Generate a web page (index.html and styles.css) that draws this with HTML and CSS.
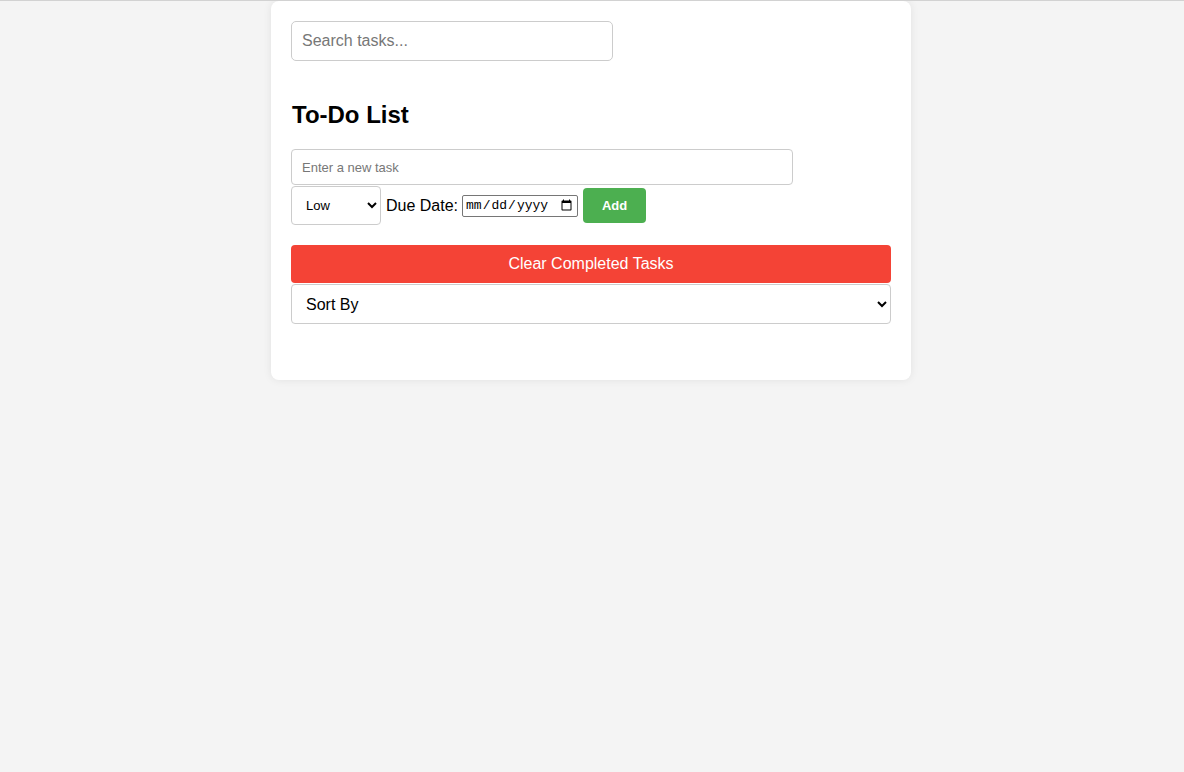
FILE: index.html
```html
<!DOCTYPE html>
<html>
<head>
<meta charset="utf-8">
<title>To-Do List</title>
<link rel="stylesheet" href="styles.css">
</head>
<body>
<div class="container">
  <input class="search" type="text" placeholder="Search tasks...">
  <h2 class="title">To-Do List</h2>
  <input class="task-input" type="text" placeholder="Enter a new task">
  <div class="row">
    <select class="priority">
      <option>Low</option>
      <option>Medium</option>
      <option>High</option>
    </select>
    <label class="due-label">Due Date:</label>
    <input class="due" type="date">
    <button class="add">Add</button>
  </div>
  <button class="clear">Clear Completed Tasks</button>
  <select class="sort">
    <option>Sort By</option>
    <option>Priority</option>
    <option>Due Date</option>
  </select>
  <ul class="list"></ul>
</div>
</body>
</html>
```
FILE: styles.css
```css
html {
  border-top: 1px solid #d2d2d2;
  background: #f4f4f4;
}
body {
  margin: 0;
  padding-right: 2px;
  font-family: "Liberation Sans", Arial, sans-serif;
  background: #f4f4f4;
  min-height: 771px;
}
.container {
  width: 600px;
  margin: 0 auto;
  padding: 20px 20px 0 20px;
  background: #fff;
  border-radius: 8px;
  box-shadow: 0 0 8px rgba(0, 0, 0, 0.08);
}
.search {
  display: block;
  width: 322px;
  height: 40px;
  box-sizing: border-box;
  padding: 10px;
  font-size: 16px;
  font-family: "Liberation Sans", Arial, sans-serif;
  border: 1px solid #ccc;
  border-radius: 5px;
  outline: none;
}
.search::placeholder { color: #777; }
.title {
  margin: 40px 0 20px 1px;
  font-size: 24px;
  font-weight: bold;
  color: #000;
}
.task-input {
  display: block;
  width: 502px;
  height: 36px;
  box-sizing: border-box;
  padding: 8px 10px;
  font-size: 13px;
  font-family: "Liberation Sans", Arial, sans-serif;
  border: 1px solid #ccc;
  border-radius: 4px;
  outline: none;
}
.task-input::placeholder { color: #777; }
.row {
  display: flex;
  align-items: center;
  gap: 5px;
  margin-top: 1px;
}
.priority {
  width: 90px;
  height: 39px;
  box-sizing: border-box;
  padding: 0 8px 0 10px;
  font-size: 13px;
  font-family: "Liberation Sans", Arial, sans-serif;
  border: 1px solid #ccc;
  border-radius: 4px;
  background: #fff;
  color: #000;
}
.due-label {
  font-size: 16px;
  color: #000;
  margin-right: -1px;
}
.due {
  width: 116px;
  height: 22px;
  box-sizing: border-box;
  padding: 1px 2px;
  font-size: 13px;
  font-family: "Liberation Mono", monospace;
  border: 1px solid #767676;
  border-radius: 2px;
}
.add {
  width: 63px;
  height: 35px;
  border: none;
  border-radius: 4px;
  background: #4caf50;
  color: #fff;
  font-weight: bold;
  font-size: 13px;
  font-family: "Liberation Sans", Arial, sans-serif;
}
.clear {
  display: block;
  width: 600px;
  height: 38px;
  margin-top: 20px;
  border: none;
  border-radius: 4px;
  background: #f44336;
  color: #fff;
  font-size: 16px;
  font-family: "Liberation Sans", Arial, sans-serif;
}
.sort {
  display: block;
  width: 600px;
  height: 40px;
  margin-top: 1px;
  box-sizing: border-box;
  padding: 0 10px 0 10px;
  font-size: 16px;
  font-family: "Liberation Sans", Arial, sans-serif;
  border: 1px solid #ccc;
  border-radius: 4px;
  background: #fff;
  color: #000;
}
.list {
  list-style: none;
  margin: 0;
  padding: 0;
  height: 56px;
}
```
